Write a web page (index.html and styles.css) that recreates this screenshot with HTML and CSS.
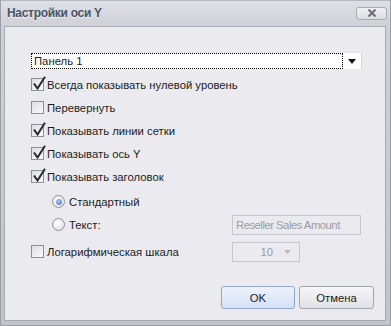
FILE: index.html
```html
<!DOCTYPE html>
<html lang="ru">
<head>
    <meta charset="UTF-8">
    <title>Настройки оси Y</title>
    <link rel="stylesheet" href="styles.css">
</head>
<body>
    <div class="window">
        <div class="titlebar">
            <span class="title">Настройки оси Y</span>
            <button class="close">
                <svg width="10" height="8" viewBox="0 0 10 8"><path d="M1.5 0.5 L8.5 7.5 M8.5 0.5 L1.5 7.5" stroke="#6f7380" stroke-width="2.2"/></svg>
            </button>
        </div>
        <div class="client">
            <div class="select">
                <div class="select-value">Панель 1</div>
                <div class="select-arrow"><svg width="8" height="5" viewBox="0 0 8 5"><path d="M0 0 H8 L4 5 Z" fill="#111"/></svg></div>
            </div>

            <div class="row">
                <span class="box checked"></span>Всегда показывать нулевой уровень
            </div>
            <div class="row">
                <span class="box"></span>Перевернуть
            </div>
            <div class="row">
                <span class="box checked"></span>Показывать линии сетки
            </div>
            <div class="row">
                <span class="box checked"></span>Показывать ось Y
            </div>
            <div class="row">
                <span class="box checked"></span>Показывать заголовок
            </div>

            <div class="row radio-row first-radio">
                <span class="radio on"></span>Стандартный
            </div>
            <div class="row radio-row">
                <span class="radio"></span><span class="radio-label">Текст:</span>
                <div class="textbox">Reseller Sales Amount</div>
            </div>

            <div class="row log-row">
                <span class="box"></span><span class="log-label">Логарифмическая шкала</span>
                <div class="spin">10 <svg width="7" height="4" viewBox="0 0 7 4"><path d="M0 0 H7 L3.5 4 Z" fill="#b4b6bd"/></svg></div>
            </div>

            <div class="buttons">
                <button class="btn ok">OK</button>
                <button class="btn">Отмена</button>
            </div>
        </div>
    </div>
</body>
</html>
```

FILE: styles.css
```css
* {
    margin: 0;
    padding: 0;
    box-sizing: border-box;
}
body {
    width: 391px;
    height: 326px;
    overflow: hidden;
    font-family: "Liberation Sans", Arial, sans-serif;
    font-size: 11.3px;
    color: #1c1c1c;
}
.window {
    width: 391px;
    height: 326px;
    border: 1px solid #9b9da6;
    border-top-color: #b4b6be;
    background: linear-gradient(to bottom, #dfe0e5 0px, #cfd0d6 26px, #c2c4cb 100%);
    padding: 0 4px 4px 3px;
    display: flex;
    flex-direction: column;
}
.titlebar {
    height: 25px;
    display: flex;
    align-items: center;
    justify-content: space-between;
    padding: 0 0 1px 3px;
}
.title {
    font-weight: bold;
    font-size: 12px;
    letter-spacing: -0.3px;
    color: #4a5366;
    text-shadow: 0 1px 0 rgba(255, 255, 255, 0.6);
}
.close {
    width: 31px;
    height: 13px;
    margin-right: -1px;
    border: 1px solid #a7a9b2;
    border-radius: 3px;
    background: linear-gradient(to bottom, #f1f1f4, #dcdde2);
    display: flex;
    align-items: center;
    justify-content: center;
}
.client {
    flex: 1;
    border: 1px solid #a8aab2;
    background: #ebebef;
    padding: 25px 11px 0 26px;
}
.select {
    width: 331px;
    height: 17px;
    background: #fff;
    border-top: 1px solid #e3e3e8;
    border-right: 1px solid #d6d7dc;
    display: flex;
    margin-bottom: 4px;
}
.select-value {
    flex: 1;
    border: 1px dotted #000;
    line-height: 14px;
    padding-left: 2px;
}
.select-arrow {
    width: 18px;
    display: flex;
    align-items: center;
    justify-content: center;
}
.row {
    height: 23px;
    display: flex;
    align-items: center;
}
.box {
    width: 13px;
    height: 13px;
    border: 1px solid #8e9098;
    background: linear-gradient(135deg, #dcdde2, #fbfbfc);
    margin-right: 3px;
    position: relative;
    flex-shrink: 0;
}
.box.checked::after {
    content: "";
    position: absolute;
    left: 1px;
    top: -3px;
    width: 13px;
    height: 14px;
    background: url("data:image/svg+xml;utf8,<svg xmlns='http://www.w3.org/2000/svg' width='13' height='14' viewBox='0 0 13 14'><path d='M1 7.5 L4.5 12.5 L12 0.8' fill='none' stroke='%232a2a2e' stroke-width='2'/></svg>") no-repeat;
}
.radio-row {
    padding-left: 21px;
}
.first-radio {
    margin-top: 2px;
}
.radio {
    width: 13px;
    height: 13px;
    border-radius: 50%;
    border: 1px solid #8e9098;
    background: radial-gradient(circle at 40% 35%, #ffffff, #dcdde3);
    margin-right: 4px;
    position: relative;
    flex-shrink: 0;
}
.radio.on::after {
    content: "";
    position: absolute;
    left: 2.5px;
    top: 2.5px;
    width: 6px;
    height: 6px;
    border-radius: 50%;
    background: radial-gradient(circle at 40% 35%, #a9c4f2, #3f6fc9);
}
.radio-label {
    width: 163px;
}
.textbox {
    width: 129px;
    height: 20px;
    border: 1px solid #c6c7cd;
    color: #9a9ba7;
    line-height: 18px;
    padding-left: 3px;
    letter-spacing: -0.5px;
    white-space: nowrap;
    overflow: hidden;
}
.log-row {
    margin-top: 4px;
}
.log-label {
    width: 185px;
}
.spin {
    width: 68px;
    height: 20px;
    border: 1px solid #c6c7cd;
    color: #9a9ba7;
    display: flex;
    align-items: center;
    justify-content: flex-end;
    gap: 11px;
    padding-right: 8px;
}
.buttons {
    display: flex;
    justify-content: flex-end;
    gap: 4px;
    margin-top: 23px;
}
.btn {
    width: 75px;
    height: 23px;
    border: 1px solid #a3a5ad;
    border-radius: 3px;
    background: linear-gradient(to bottom, #f6f6f8, #e1e2e6);
    font-family: "Liberation Sans", Arial, sans-serif;
    font-size: 11.3px;
    color: #1c1c1c;
}
.btn.ok {
    width: 74px;
    border-color: #8fa6d2;
    background: linear-gradient(to bottom, #eef3fd, #d3e0f7);
}
```
